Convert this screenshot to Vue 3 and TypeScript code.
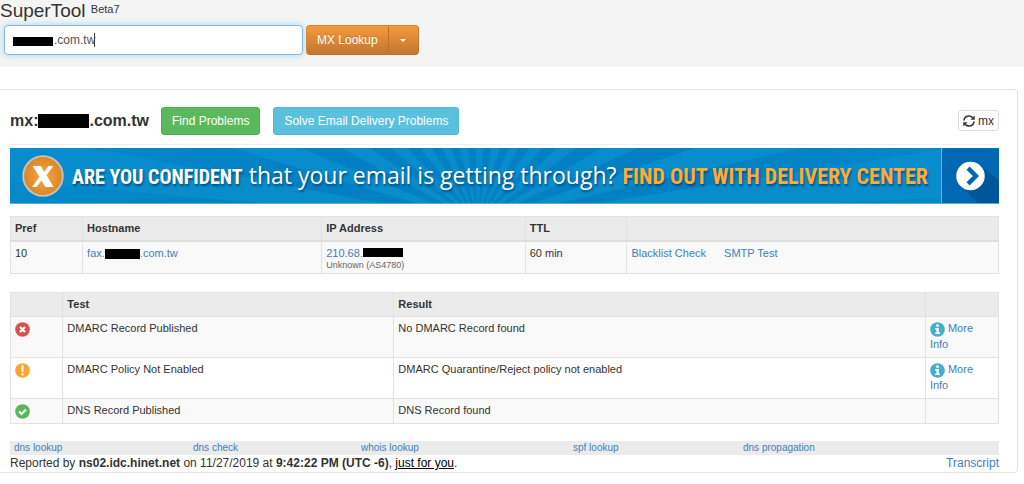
<script setup lang="ts">
import { ref } from 'vue'

type Status = 'fail' | 'warn' | 'pass'

interface TestRow {
  status: Status
  label: string
  test: string
  result: string
  info: boolean
}

const domain = ref('.com.tw')

const tests: TestRow[] = [
  { status: 'fail', label: 'Failed', test: 'DMARC Record Published', result: 'No DMARC Record found', info: true },
  { status: 'warn', label: 'Warning', test: 'DMARC Policy Not Enabled', result: 'DMARC Quarantine/Reject policy not enabled', info: true },
  { status: 'pass', label: 'Passed', test: 'DNS Record Published', result: 'DNS Record found', info: false },
]

const tools: string[] = ['dns lookup', 'dns check', 'whois lookup', 'spf lookup', 'dns propagation']

const rays: number[] = [-82, -70, -58, -46, -34, -22, -10, 2, 14, 26, 38, 50, 62, 74, 84]

function ray(angle: number): string {
  const length = 620
  const point = (degrees: number): string => {
    const a = (degrees * Math.PI) / 180
    return `${(467 + Math.sin(a) * length).toFixed(1)},${(75 - Math.cos(a) * length).toFixed(1)}`
  }
  return `467,75 ${point(angle - 3)} ${point(angle + 3)}`
}
</script>

<template>
  <div class="page">
    <header class="search">
      <h1>SuperTool <sup>Beta7</sup></h1>
      <form class="search-row" @submit.prevent>
        <div class="field">
          <input v-model="domain" type="text" aria-label="Domain name" />
          <span class="field-mask"></span>
          <span class="caret"></span>
        </div>
        <div class="split">
          <button type="submit" class="lookup">MX Lookup</button>
          <button type="button" class="toggle" aria-label="More lookups"><span></span></button>
        </div>
      </form>
    </header>

    <main class="card">
      <div class="heading">
        <h2>mx:<span class="mask"></span>.com.tw</h2>
        <button type="button" class="btn green">Find Problems</button>
        <button type="button" class="btn cyan">Solve Email Delivery Problems</button>
        <button type="button" class="refresh">
          <svg width="12" height="12" viewBox="0 0 12 12" aria-hidden="true">
            <path d="M1 5.5C1.3 2.8 3.3 1 6 1c1.5 0 2.8.6 3.7 1.6M11 6.5C10.7 9.2 8.7 11 6 11c-1.5 0-2.8-.6-3.7-1.6" fill="none" stroke="#333" stroke-width="1.7" />
            <path d="M11.7.6v4.2H7.5zM.3 11.4V7.2h4.200z" fill="#333" />
          </svg>
          mx
        </button>
      </div>

      <a href="#" class="banner">
        <svg class="rays" viewBox="0 0 989 56" preserveAspectRatio="none" aria-hidden="true">
          <polygon v-for="angle in rays" :key="angle" :points="ray(angle)" fill="#088ccb" />
        </svg>
        <svg class="badge" width="42" height="42" viewBox="0 0 42 42" aria-hidden="true">
          <defs>
            <radialGradient id="badge-fill">
              <stop offset="0" stop-color="#f6a83f" />
              <stop offset="1" stop-color="#dd842a" />
            </radialGradient>
          </defs>
          <circle cx="21" cy="21" r="19.8" fill="url(#badge-fill)" stroke="#c9c5bd" stroke-width="1.8" />
          <path d="M10.500 11h8.300l3.400 5.700L26.500 11h4.800l-6.800 9.300 7.200 11.700h-8.400l-3.900-6.500-5 6.500H10l7.500-10.300z" fill="#fff" />
        </svg>
        <span class="pitch">
          <b>ARE YOU CONFIDENT</b>
          <span class="question">that your email is getting through?</span>
          <b class="offer">FIND OUT WITH DELIVERY CENTER</b>
        </span>
        <svg class="go" width="58" height="56" viewBox="0 0 58 56" aria-hidden="true">
          <rect width="58" height="56" fill="#0267b3" />
          <path d="M39 17L58 33v23H37L19 38z" fill="#01569a" />
          <circle cx="29" cy="28" r="14.5" fill="#fff" />
          <path d="M26.500 20l8 8-8 8" fill="none" stroke="#0267b3" stroke-width="4.500" />
        </svg>
      </a>

      <table class="records">
        <colgroup>
          <col class="c-pref" /><col class="c-host" /><col class="c-ip" /><col class="c-ttl" /><col />
        </colgroup>
        <thead>
          <tr><th>Pref</th><th>Hostname</th><th>IP Address</th><th>TTL</th><th></th></tr>
        </thead>
        <tbody>
          <tr>
            <td>10</td>
            <td><a href="#">fax.<span class="mask host"></span>.com.tw</a></td>
            <td><a href="#">210.68.<span class="mask ip"></span></a><small>Unknown (AS4780)</small></td>
            <td>60 min</td>
            <td><div class="actions"><a href="#">Blacklist Check</a><a href="#">SMTP Test</a></div></td>
          </tr>
        </tbody>
      </table>

      <table class="tests">
        <colgroup>
          <col class="c-icon" /><col class="c-test" /><col /><col class="c-info" />
        </colgroup>
        <thead>
          <tr><th></th><th>Test</th><th>Result</th><th></th></tr>
        </thead>
        <tbody>
          <tr v-for="row in tests" :key="row.test">
            <td>
              <svg class="icon" width="15" height="15" viewBox="0 0 15 15" role="img" :aria-label="row.label">
                <template v-if="row.status === 'fail'">
                  <circle cx="7.5" cy="7.5" r="7.3" fill="#d9504d" />
                  <path d="M5 5l5 5M10 5l-5 5" stroke="#fff" stroke-width="2.2" />
                </template>
                <template v-else-if="row.status === 'warn'">
                  <circle cx="7.5" cy="7.5" r="7.3" fill="#fba52e" />
                  <path d="M6.300 2.500h2.400l-.4 6.500H6.700z" fill="#fff" />
                  <circle cx="7.5" cy="11.3" r="1.3" fill="#fff" />
                </template>
                <template v-else>
                  <circle cx="7.5" cy="7.5" r="7.3" fill="#56b658" />
                  <path d="M4 7.500l2.500 2.500L11 5.500" fill="none" stroke="#fff" stroke-width="2.2" />
                </template>
              </svg>
            </td>
            <td>{{ row.test }}</td>
            <td>{{ row.result }}</td>
            <td>
              <a v-if="row.info" href="#">
                <svg class="icon" width="15" height="15" viewBox="0 0 15 15" aria-hidden="true">
                  <circle cx="7.5" cy="7.5" r="7.3" fill="#46aecf" />
                  <path d="M6.200 2.500h2.600v2.200H6.200zM5.200 6h3.600v4.500h1.200v1.600H5.200v-1.600h1.200V7.500H5.200z" fill="#fff" />
                </svg>
                More Info
              </a>
            </td>
          </tr>
        </tbody>
      </table>

      <nav class="tools">
        <a v-for="tool in tools" :key="tool" href="#">{{ tool }}</a>
      </nav>
      <footer>
        <span>Reported by <b>ns02.idc.hinet.net</b> on 11/27/2019 at <b>9:42:22 PM (UTC -6)</b>, <u>just for you</u>.</span>
        <a href="#">Transcript</a>
      </footer>
    </main>
  </div>
</template>

<style>
body {
  margin: 0;
  background: #fff;
}
</style>

<style scoped>
.page {
  font: 12px/16px "Liberation Sans", Arial, sans-serif;
  color: #333;
}
.page * {
  box-sizing: border-box;
}
a {
  color: #3f7fbd;
  text-decoration: none;
}
button {
  font: inherit;
  color: #fff;
  cursor: pointer;
}
.search {
  background: #f4f4f4;
  height: 67px;
}
h1 {
  margin: 0;
  font-size: 19px;
  line-height: 22px;
  height: 25px;
  font-weight: 400;
}
sup {
  font-size: 11px;
  line-height: 12px;
  vertical-align: 4px;
}
.search-row {
  display: flex;
  gap: 3px;
  padding-left: 4px;
}
.field {
  position: relative;
  flex: 0 1 299px;
}
.field input {
  display: block;
  width: 100%;
  height: 30px;
  padding: 0 8px 0 49px;
  border: 1px solid #7dbcee;
  border-radius: 4px;
  outline: none;
  box-shadow: 0 0 6px rgba(102, 175, 233, 0.5);
  background: #fff;
  color: #555;
  font: inherit;
}
.field-mask {
  position: absolute;
  left: 9px;
  top: 12px;
  width: 40px;
  height: 9px;
  background: #000;
}
.caret {
  position: absolute;
  left: 90px;
  top: 8px;
  width: 1px;
  height: 14px;
  background: #444;
}
.split {
  display: flex;
}
.split button {
  height: 30px;
  border: 1px solid #b9742f;
  background: linear-gradient(#f7993c, #c2762f);
  text-shadow: 0 -1px 0 rgba(0, 0, 0, 0.2);
}
.split .lookup {
  padding: 0 10px;
  border-color: #d98330 #b8702b #b86f2b #d98330;
  border-radius: 4px 0 0 4px;
}
.split .toggle {
  width: 30px;
  padding: 0;
  border-left: 0;
  border-color: #d98330 #c2762f #b86f2b;
  border-radius: 0 4px 4px 0;
}
.toggle span {
  display: block;
  width: 6px;
  margin: 1px auto 0;
  border: 3px solid transparent;
  border-top-color: #fff;
  border-bottom: 0;
}
.card {
  margin: 22px 6px 0 0;
  padding: 17px 18px 1px 10px;
  border: 1px solid #e3e3e3;
  border-left: 0;
  border-radius: 0 4px 4px 0;
}
.heading {
  display: flex;
  align-items: center;
  height: 38px;
  padding-bottom: 10px;
  border-bottom: 1px solid #eee;
}
h2 {
  display: flex;
  align-items: center;
  margin: 0 12px 0 0;
  font-size: 16px;
  line-height: 20px;
}
.mask {
  display: inline-block;
  width: 51px;
  height: 14px;
  background: #000;
}
.btn {
  height: 28px;
  padding: 0 10px;
  border: 1px solid;
  border-radius: 3px;
}
.green {
  margin-right: 13px;
  background: #5cb85c;
  border-color: #4fae4f;
}
.cyan {
  background: #5bc0de;
  border-color: #4eb8d8;
}
.refresh {
  display: flex;
  align-items: center;
  gap: 3px;
  height: 21px;
  margin-left: auto;
  padding: 0 4px;
  border: 1px solid #ddd;
  border-radius: 3px;
  background: #fff;
  color: #333;
}
.banner {
  position: relative;
  display: flex;
  align-items: center;
  height: 56px;
  margin: 3px 0 12px;
  background: linear-gradient(100deg, #058acb, #0380c3 30%, #0380c3 70%, #058acb);
  overflow: hidden;
  color: #fff;
  border-bottom: 1px solid #58acd9;
}
.rays {
  position: absolute;
  inset: 0;
  width: 100%;
  height: 100%;
}
.badge {
  position: relative;
  flex: none;
  margin: 0 8px 0 12px;
}
.pitch {
  position: relative;
  display: flex;
  flex: 1;
  align-items: baseline;
  justify-content: space-between;
  margin-right: 13px;
  font: 20px/30px "Roboto Condensed", "Liberation Sans Narrow", sans-serif;
  text-shadow: 1px 2px 2px rgba(0, 40, 90, 0.6);
  white-space: nowrap;
}
.question {
  font-family: "Open Sans", sans-serif;
  font-size: 23px;
}
.offer {
  color: #fbac3b;
  font-size: 22px;
}
.go {
  position: relative;
  flex: none;
  border-left: 1px solid #6ab5e0;
}
table {
  width: 100%;
  border-collapse: collapse;
  table-layout: fixed;
  font-size: 11px;
  border: 1px solid #e4e4e4;
}
th,
td {
  padding: 3px 4px 4px;
  text-align: left;
  vertical-align: top;
  border: 1px solid #e2e2e2;
}
th {
  background: #ebebeb;
}
tbody tr:nth-child(odd) {
  background: #f9f9f9;
}
.records th {
  border-bottom: 2px solid #ddd;
}
.c-pref {
  width: 7.3%;
}
.c-host {
  width: 24.2%;
}
.c-ip {
  width: 20.6%;
}
.c-ttl {
  width: 10.3%;
}
.c-icon {
  width: 5.3%;
}
.c-test {
  width: 33.5%;
}
.c-info {
  width: 7.4%;
}
.host {
  width: 35px;
  height: 10px;
  vertical-align: -2px;
}
.ip {
  width: 40px;
  height: 9px;
}
small {
  display: block;
  font-size: 9px;
  line-height: 8px;
  color: #666;
}
.actions {
  display: flex;
  gap: 18px;
}
.tests {
  margin-top: 18px;
}
.tests td {
  padding-bottom: 5px;
}
.icon {
  display: inline-block;
  vertical-align: top;
  margin: 2px 0 -1px;
}
.tools {
  display: grid;
  grid-template-columns: 179fr 168fr 212fr 170fr 260fr;
  margin-top: 17px;
  background: #ebebeb;
  font-size: 10px;
  line-height: 14px;
}
.tools a {
  padding-left: 4px;
}
footer {
  display: flex;
  justify-content: space-between;
}
footer u {
  color: #000;
}
</style>
